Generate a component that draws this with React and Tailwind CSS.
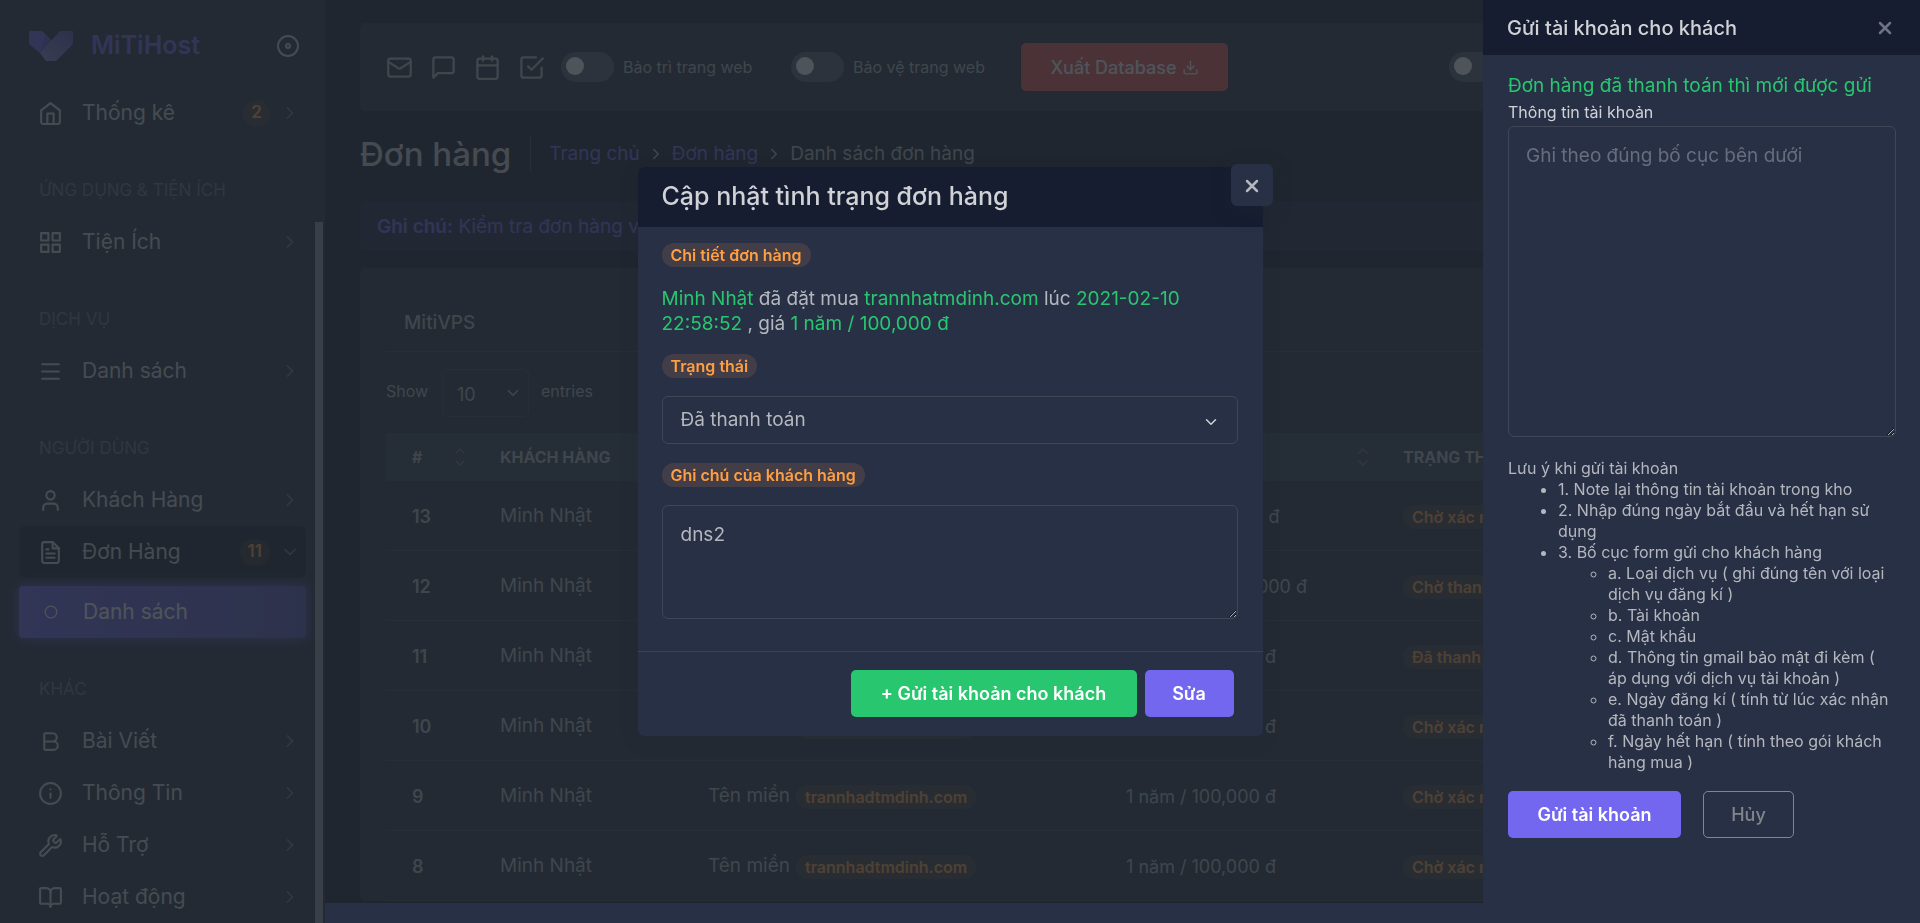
import React from 'react';
import {
  Bold,
  BookOpen,
  Calendar,
  ChevronDown,
  ChevronRight,
  ChevronUp,
  Circle,
  Disc,
  Download,
  Info,
  Mail,
  Menu,
  User,
  Wrench,
  X,
} from 'lucide-react';
import { FiCheckSquare, FiFileText, FiGrid, FiHome, FiMessageSquare } from 'react-icons/fi';

const sections = [
  { items: [{ label: 'Thống kê', icon: FiHome, badge: '2' }] },
  { title: 'Ứng dụng & Tiện ích', items: [{ label: 'Tiện Ích', icon: FiGrid }] },
  { title: 'Dịch vụ', items: [{ label: 'Danh sách', icon: Menu }] },
  {
    title: 'Người dùng',
    items: [
      { label: 'Khách Hàng', icon: User },
      { label: 'Đơn Hàng', icon: FiFileText, badge: '11', open: true, children: ['Danh sách'] },
    ],
  },
  {
    title: 'Khác',
    items: [
      { label: 'Bài Viết', icon: Bold },
      { label: 'Thông Tin', icon: Info },
      { label: 'Hỗ Trợ', icon: Wrench },
      { label: 'Hoạt động', icon: BookOpen },
    ],
  },
];

const orders = [
  { id: 13, price: '1 năm / 200,000 đ', status: 'Chờ xác nhận' },
  { id: 12, price: '10 năm / 2,000,000 đ', status: 'Chờ thanh toán' },
  { id: 11, price: '1 năm / 100,000 đ', status: 'Đã thanh toán' },
  { id: 10, price: '1 năm / 100,000 đ', status: 'Chờ xác nhận' },
  { id: 9, price: '1 năm / 100,000 đ', status: 'Chờ xác nhận' },
  { id: 8, price: '1 năm / 100,000 đ', status: 'Chờ xác nhận' },
];

const formFields = [
  'a. Loại dịch vụ ( ghi đúng tên với loại dịch vụ đăng kí )',
  'b. Tài khoản',
  'c. Mật khẩu',
  'd. Thông tin gmail bảo mật đi kèm ( áp dụng với dịch vụ tài khoản )',
  'e. Ngày đăng kí ( tính từ lúc xác nhận đã thanh toán )',
  'f. Ngày hết hạn ( tính theo gói khách hàng mua )',
];

function Logo() {
  return (
    <svg width="44" height="30" viewBox="0 0 44 30" aria-hidden="true">
      <defs>
        <linearGradient id="logo-right" x1="1" y1="0" x2="0.2" y2="1">
          <stop offset="0" stopColor="#5a52b8" />
          <stop offset="1" stopColor="#8f87d8" />
        </linearGradient>
      </defs>
      <path d="M0 0h13l10 10-12 12L0 13z" fill="#7367f0" />
      <path d="M16 4l7 6-12 12z" fill="#5f55cf" />
      <path d="M31 0h13v13L27 30H17l-6-8z" fill="url(#logo-right)" />
    </svg>
  );
}

function Badge({ children }) {
  return (
    <span className="inline-flex h-6 items-center rounded-full bg-[#ff9f43]/12 px-[9px] text-base font-semibold whitespace-nowrap text-[#ff9f43]">
      {children}
    </span>
  );
}

function NavItem({ item }) {
  const Icon = item.icon;
  const Chevron = item.open ? ChevronDown : ChevronRight;
  return (
    <li>
      <a
        href="#"
        className={
          'flex h-[52px] items-center rounded-md pr-[6px] pl-[19px] text-[21px] text-[#d0d2d6] ' +
          (item.open ? 'bg-[#161d31]' : '')
        }
      >
        <Icon size={25} strokeWidth={2} className="mr-[19px] shrink-0" />
        <span className="flex-1">{item.label}</span>
        {item.badge && (
          <span className="mr-[10px] flex h-[27px] min-w-[27px] items-center justify-center rounded-full bg-[#ff9f43]/12 px-2 text-[17px] font-semibold text-[#ff9f43]">
            {item.badge}
          </span>
        )}
        <Chevron size={20} className="text-[#6f7482]" />
      </a>
      {item.children && (
        <ul className="pt-2">
          {item.children.map((child) => (
            <li key={child}>
              <a
                href="#"
                className="flex h-[52px] items-center rounded-sm bg-linear-to-r from-[#7367f0] to-[#7367f0]/70 pl-[25px] text-[21px] text-white shadow-[0_0_12px_1px_rgba(115,103,240,0.7)]"
              >
                <Circle size={14} strokeWidth={2} className="mr-[25px]" />
                {child}
              </a>
            </li>
          ))}
        </ul>
      )}
    </li>
  );
}

function Sidebar() {
  return (
    <aside className="flex w-[325px] shrink-0 bg-[#283046]">
      <div className="flex min-w-0 flex-1 flex-col overflow-hidden pl-[19px]">
        <div className="flex h-[87px] shrink-0 items-center pt-[16px] pr-[15px] pb-3 pl-[10px]">
          <Logo />
          <span className="ml-[18px] flex-1 text-[25px] font-semibold text-[#7367f0]">MiTiHost</span>
          <button type="button" aria-label="Thu gọn" className="text-[#d0d2d6]">
            <Disc size={24} />
          </button>
        </div>
        <nav className="pr-[9px]">
          {sections.map((section, index) => (
            <div key={index}>
              {section.title && (
                <h2 className="h-[77px] pt-[39px] pl-5 text-[17px] leading-6 text-[#676d7d] uppercase">
                  {section.title}
                </h2>
              )}
              <ul>
                {section.items.map((item) => (
                  <NavItem key={item.label} item={item} />
                ))}
              </ul>
            </div>
          ))}
        </nav>
      </div>
      <div className="mr-[2px] flex w-2 flex-col pt-[222px]">
        <div className="flex-1 bg-[#8f949e]" />
      </div>
    </aside>
  );
}

function Toggle({ label, id }) {
  return (
    <div className="flex shrink-0 items-center gap-[9px]">
      <input
        id={id}
        type="checkbox"
        className="flex h-[30px] w-[53px] appearance-none items-start rounded-full bg-[#545b6e] px-[5px] pt-[5px] before:block before:size-[18px] before:rounded-full before:bg-white before:content-['']"
      />
      <label htmlFor={id} className="w-[134px] text-base whitespace-nowrap text-[#b4b7bd]">
        {label}
      </label>
    </div>
  );
}

function Topbar() {
  return (
    <header className="flex h-[88px] shrink-0 items-center rounded-md bg-[#283046] pl-[26px]">
      <div className="flex gap-[17px] text-[#b4b7bd]">
        <a href="#" aria-label="Thư">
          <Mail size={27} />
        </a>
        <a href="#" aria-label="Tin nhắn">
          <FiMessageSquare size={27} />
        </a>
        <a href="#" aria-label="Lịch">
          <Calendar size={27} />
        </a>
        <a href="#" aria-label="Công việc">
          <FiCheckSquare size={27} />
        </a>
      </div>
      <div className="ml-4 flex items-center gap-[34px]">
        <Toggle id="maintenance" label="Bảo trì trang web" />
        <Toggle id="protection" label="Bảo vệ trang web" />
        <button
          type="button"
          className="flex h-12 w-[207px] items-center justify-center gap-[5px] rounded-[5px] bg-[#ea5455] text-[18px] font-medium text-white"
        >
          Xuất Database
          <Download size={17} />
        </button>
      </div>
      <div className="ml-[221px]">
        <Toggle id="theme" label="Giao diện tối" />
      </div>
    </header>
  );
}

function SortHead({ children }) {
  return (
    <th scope="col" className="h-12 bg-[#343d55] p-0 pr-[6px] pl-[26px] text-left">
      <div className="flex items-center justify-between">
        <span className="text-base font-bold whitespace-nowrap text-[#b4b7bd] uppercase">{children}</span>
        <span className="flex flex-col text-[#6f7482]">
          <ChevronUp size={16} className="-mb-1" />
          <ChevronDown size={16} />
        </span>
      </div>
    </th>
  );
}

function OrdersCard() {
  const cell = 'h-[70px] border-b border-[#3b4253] p-0 pt-[2px] pl-[26px] whitespace-nowrap';
  return (
    <section className="mt-[17px] rounded-md bg-[#283046] px-[26px] text-[#b4b7bd]">
      <h2 className="h-[84px] border-b border-[#3b4253] pt-[43px] pl-[18px] text-[19px] leading-6 font-medium">
        MitiVPS
      </h2>
      <div className="flex items-start pt-[17px] text-base">
        <label htmlFor="page-size" className="w-14 pt-[10px] leading-6">
          Show
        </label>
        <div className="relative">
          <select
            id="page-size"
            defaultValue="10"
            className="h-12 w-[87px] appearance-none rounded-md border border-[#3b4253] bg-[#283046] pt-[2px] pl-[14px] text-[18px] text-[#b4b7bd]"
          >
            <option>10</option>
            <option>25</option>
            <option>50</option>
          </select>
          <ChevronDown size={18} className="pointer-events-none absolute top-[15px] right-[7px]" />
        </div>
        <span className="pt-[10px] pl-3 leading-6">entries</span>
      </div>
      <table className="mt-4 w-full table-fixed border-separate border-spacing-0 text-[19px]">
        <colgroup>
          <col className="w-[88px]" />
          <col className="w-[208px]" />
          <col className="w-[418px]" />
          <col className="w-[277px]" />
          <col />
        </colgroup>
        <thead>
          <tr>
            <SortHead>#</SortHead>
            <SortHead>Khách hàng</SortHead>
            <SortHead>Dịch vụ</SortHead>
            <SortHead>Giá</SortHead>
            <SortHead>Trạng thái</SortHead>
          </tr>
        </thead>
        <tbody>
          {orders.map((order) => (
            <tr key={order.id}>
              <td className={cell + ' text-[18px] font-semibold'}>{order.id}</td>
              <td className={cell}>Minh Nhật</td>
              <td className={cell}>
                <span className="flex items-center gap-[6px]">
                  Tên miền <Badge>trannhadtmdinh.com</Badge>
                </span>
              </td>
              <td className={cell + ' text-[18px]'}>{order.price}</td>
              <td className={cell}>
                <span className="flex">
                  <Badge>{order.status}</Badge>
                </span>
              </td>
            </tr>
          ))}
        </tbody>
      </table>
    </section>
  );
}

function OrderModal() {
  const field = 'w-full rounded-md border border-[#404656] bg-[#283046] text-[19px] text-[#b4b7bd]';
  return (
    <div className="fixed inset-0 z-30 flex items-center justify-center pr-5 pb-5">
      <div
        role="dialog"
        aria-labelledby="order-title"
        className="relative w-full max-w-[625px] rounded-md bg-[#283046] shadow-[0_5px_20px_rgba(34,41,47,0.1)]"
      >
        <div className="flex h-[60px] items-center rounded-t-md bg-[#161d31] px-6">
          <h2 id="order-title" className="text-[25px] font-medium text-[#d0d2d6]">
            Cập nhật tình trạng đơn hàng
          </h2>
          <button
            type="button"
            aria-label="Đóng"
            className="absolute -top-[3px] -right-[10px] flex size-[42px] items-center justify-center rounded-md bg-[#283046] pt-[2px] text-[#b4b7bd] shadow-[0_5px_20px_rgba(34,41,47,0.3)]"
          >
            <X size={20} strokeWidth={3} />
          </button>
        </div>
        <div className="flex flex-col items-start pt-4 pr-[25px] pl-6">
          <Badge>Chi tiết đơn hàng</Badge>
          <p className="pt-[19px] pb-[18px] text-[19px] leading-[25px] text-[#b4b7bd]">
            <span className="text-[#28c76f]">Minh Nhật</span> đã đặt mua{' '}
            <span className="text-[#28c76f]">trannhatmdinh.com</span> lúc{' '}
            <span className="text-[#28c76f]">
              2021-02-10
              <br />
              22:58:52
            </span>{' '}
            , giá <span className="text-[#28c76f]">1 năm / 100,000 đ</span>
          </p>
          <label htmlFor="status" className="flex">
            <Badge>Trạng thái</Badge>
          </label>
          <div className="relative mt-[18px] w-full">
            <select id="status" defaultValue="Đã thanh toán" className={field + ' h-12 appearance-none px-[18px]'}>
              <option>Đã thanh toán</option>
              <option>Chờ thanh toán</option>
              <option>Chờ xác nhận</option>
            </select>
            <ChevronDown size={18} className="pointer-events-none absolute top-[17px] right-[18px] text-[#d0d2d6]" />
          </div>
          <label htmlFor="note" className="mt-[19px] flex">
            <Badge>Ghi chú của khách hàng</Badge>
          </label>
          <textarea
            id="note"
            defaultValue="dns2"
            className={field + ' mt-[18px] block h-[114px] px-[18px] py-4 leading-[26px]'}
          />
        </div>
        <div className="mt-8 flex h-[85px] justify-end gap-2 border-t border-[#3b4253] pt-[18px] pr-[29px]">
          <button
            type="button"
            className="h-[47px] w-[286px] rounded-[5px] bg-[#28c76f] text-[18px] font-semibold text-white"
          >
            + Gửi tài khoản cho khách
          </button>
          <button
            type="button"
            className="h-[47px] w-[89px] rounded-[5px] bg-[#7367f0] text-[18px] font-semibold text-white"
          >
            Sửa
          </button>
        </div>
      </div>
    </div>
  );
}

function AccountDrawer() {
  return (
    <aside className="fixed inset-y-0 right-0 z-40 w-[437px] bg-[#283046] text-[#b4b7bd]">
      <div className="flex h-[55px] items-center justify-between bg-[#161d31] pr-[25px] pl-6">
        <h2 className="text-[20px] font-medium text-[#d0d2d6]">Gửi tài khoản cho khách</h2>
        <button type="button" aria-label="Đóng" className="text-[#6f7385]">
          <X size={20} strokeWidth={3} />
        </button>
      </div>
      <div className="pt-[18px] pr-6 pl-[25px]">
        <p className="text-[19px] leading-[26px] whitespace-nowrap text-[#28c76f]">
          Đơn hàng đã thanh toán thì mới được gửi
        </p>
        <label htmlFor="account-info" className="block text-base leading-[27px] text-[#d0d2d6]">
          Thông tin tài khoản
        </label>
        <textarea
          id="account-info"
          placeholder="Ghi theo đúng bố cục bên dưới"
          className="block h-[311px] w-full rounded-md border border-[#404656] px-[17px] py-4 text-[19px] leading-[26px] placeholder:text-[#676d7d]"
        />
        <p className="mt-5 text-base leading-[22px]">Lưu ý khi gửi tài khoản</p>
        <ul className="list-disc pl-[50px] text-base leading-[21px]">
          <li>1. Note lại thông tin tài khoản trong kho</li>
          <li>2. Nhập đúng ngày bắt đầu và hết hạn sử dụng</li>
          <li>
            3. Bố cục form gửi cho khách hàng
            <ul className="list-[circle] pl-[50px]">
              {formFields.map((text) => (
                <li key={text}>{text}</li>
              ))}
            </ul>
          </li>
        </ul>
        <div className="mt-[18px] flex gap-[22px]">
          <button
            type="button"
            className="h-[47px] w-[173px] rounded-[5px] bg-[#7367f0] text-[18px] font-semibold text-white"
          >
            Gửi tài khoản
          </button>
          <button
            type="button"
            className="h-[47px] w-[91px] rounded-[5px] border border-[#82868b] text-[18px] font-medium text-[#82868b]"
          >
            Hủy
          </button>
        </div>
      </div>
    </aside>
  );
}

export default function App() {
  return (
    <div className="flex h-screen overflow-hidden bg-[#161d31] font-['Inter','Noto_Sans',sans-serif] text-[19px]">
      <Sidebar />
      <div className="flex min-w-0 flex-1 flex-col">
        <main className="min-h-0 flex-1 overflow-hidden px-[35px] pt-[23px]">
          <Topbar />
          <div className="mt-[25px] flex h-9 items-center">
            <h1 className="border-r border-[#3b4253] pr-[19px] text-[33px] leading-9 font-medium text-[#d0d2d6]">
              Đơn hàng
            </h1>
            <nav aria-label="Breadcrumb" className="flex items-center gap-[7px] pl-[18px] text-[19px] text-[#b4b7bd]">
              <a href="#" className="text-[#7367f0]">
                Trang chủ
              </a>
              <ChevronRight size={18} />
              <a href="#" className="text-[#7367f0]">
                Đơn hàng
              </a>
              <ChevronRight size={18} />
              <span>Danh sách đơn hàng</span>
            </nav>
          </div>
          <div className="mt-[29px] flex h-[50px] items-center rounded-md bg-[#7367f0]/12 pt-[2px] pl-[17px] text-[#7367f0]">
            <p>
              <strong className="font-semibold">Ghi chú:</strong> Kiểm tra đơn hàng và cập nhật trạng thái
            </p>
          </div>
          <OrdersCard />
        </main>
        <div className="z-20 h-5 shrink-0 bg-[#283046]" />
      </div>
      <div className="fixed inset-0 z-10 bg-[#22292f]/80" />
      <OrderModal />
      <AccountDrawer />
    </div>
  );
}
